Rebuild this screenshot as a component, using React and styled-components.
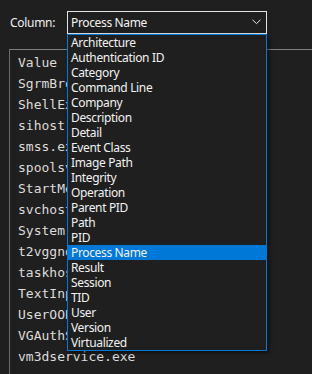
import React from "react";
import styled, { createGlobalStyle } from "styled-components";

const GlobalStyle = createGlobalStyle`
  html, body { margin: 0; padding: 0; background: #1f1f1f; overflow: hidden; }
  body { font-family: "Noto Sans", "Open Sans", sans-serif; color: #f0f0f0; }
`;

const Page = styled.div`
  position: relative;
  width: 312px;
  height: 374px;
  overflow: hidden;
  background: #1f1f1f;
`;

const Toolbar = styled.div`
  display: flex;
  align-items: center;
  margin-top: 11px;
  padding-left: 10px;
  height: 23px;
`;

const Label = styled.span`
  width: 57px;
  font-size: 12px;
  line-height: 16px;
  letter-spacing: -0.3px;
  color: #f0f0f0;
`;

const Combo = styled.div`
  position: relative;
  box-sizing: border-box;
  width: 200px;
  height: 23px;
  border: 1px solid #e3e3e3;
  display: flex;
  align-items: center;
  padding-left: 3px;
  font-size: 12px;
  letter-spacing: -0.35px;
  color: #f4f4f4;
`;

const Chevron = styled.svg`
  position: absolute;
  right: 5px;
  top: 7px;
`;

const Dropdown = styled.ul`
  position: absolute;
  z-index: 2;
  top: 22px;
  left: -1px;
  box-sizing: border-box;
  width: 200px;
  margin: 0;
  padding: 0;
  list-style: none;
  background: #1f1f1f;
  border: 1px solid #0078d7;
  box-shadow: 2px 2px 4px rgba(0, 0, 0, 0.55);
`;

const Option = styled.li`
  height: 15px;
  line-height: 15px;
  padding-left: 3px;
  font-size: 12px;
  letter-spacing: -0.35px;
  white-space: nowrap;
  color: #f2f2f2;
  background: ${(p) => (p.$selected ? "#0078d7" : "transparent")};
`;

const Panel = styled.div`
  margin-top: 15px;
  margin-left: 9px;
  height: 340px;
  border-top: 1px solid #7f7f7f;
  border-left: 1px solid #6a6a6a;
  padding: 2px 0 0 8px;
`;

const Row = styled.div`
  height: 21px;
  line-height: 21px;
  font-family: "DejaVu Sans Mono", "Liberation Mono", monospace;
  font-size: 13px;
  color: #dcdcdc;
  white-space: nowrap;
`;

const options = [
  "Architecture",
  "Authentication ID",
  "Category",
  "Command Line",
  "Company",
  "Description",
  "Detail",
  "Event Class",
  "Image Path",
  "Integrity",
  "Operation",
  "Parent PID",
  "Path",
  "PID",
  "Process Name",
  "Result",
  "Session",
  "TID",
  "User",
  "Version",
  "Virtualized",
];

const values = [
  "Value",
  "SgrmBroker.exe",
  "ShellExperienceHost.exe",
  "sihost.exe",
  "smss.exe",
  "spoolsv.exe",
  "StartMenuExperienceHost.exe",
  "svchost.exe",
  "System",
  "t2vggnd.exe",
  "taskhostw.exe",
  "TextInputHost.exe",
  "UserOOBEBroker.exe",
  "VGAuthService.exe",
  "vm3dservice.exe",
];

export default function App() {
  const selected = "Process Name";
  return (
    <Page>
      <GlobalStyle />
      <Toolbar>
        <Label>Column:</Label>
        <Combo>
          {selected}
          <Chevron width="9" height="6" viewBox="0 0 9 6">
            <path d="M0.5 0.8 L4.5 4.6 L8.5 0.8" fill="none" stroke="#e8e8e8" strokeWidth="1" />
          </Chevron>
          <Dropdown>
            {options.map((o) => (
              <Option key={o} $selected={o === selected}>
                {o}
              </Option>
            ))}
          </Dropdown>
        </Combo>
      </Toolbar>
      <Panel>
        {values.map((v) => (
          <Row key={v}>{v}</Row>
        ))}
      </Panel>
    </Page>
  );
}
